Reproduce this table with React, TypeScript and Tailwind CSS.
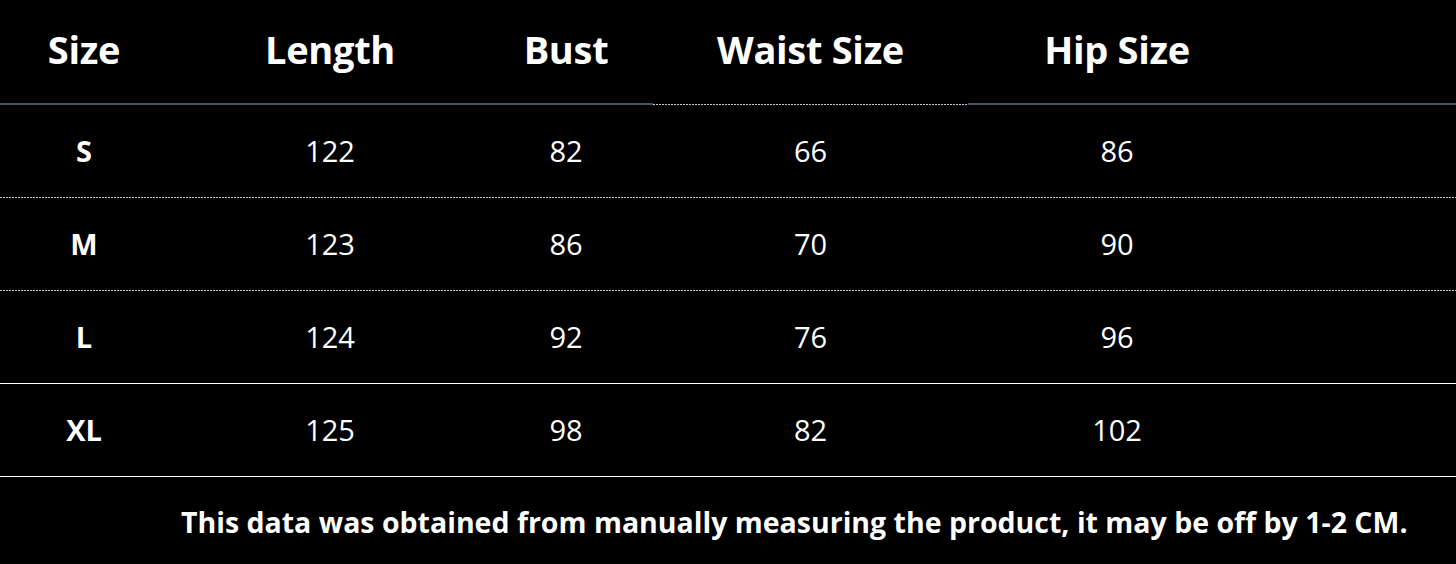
const rows = [
  ["S", "122", "82", "66", "86"],
  ["M", "123", "86", "70", "90"],
  ["L", "124", "92", "76", "96"],
  ["XL", "125", "98", "82", "102"],
];

// column widths: Size | Length | Bust | Waist | Hip | spare
const cols = ["w-[168px]", "w-[324px]", "w-[161px]", "w-[315px]", "w-[298px]", "flex-1"];
const pads = ["", "", "pr-[13px]", "", "", ""];

const dashed =
  "h-px w-full bg-[repeating-linear-gradient(90deg,#c3cbd9_0_2px,transparent_2px_3px)]";

export default function App() {
  return (
    <main className="flex h-[564px] w-[1456px] flex-col bg-black text-white font-['Open_Sans','Noto_Sans',sans-serif]">
      <div className="flex h-[105px] flex-row items-end">
        {["Size", "Length", "Bust", "Waist Size", "Hip Size", ""].map((h, i) => (
          <div key={i} className={`${cols[i]} flex h-full flex-col`}>
            <div className={`${pads[i]} flex flex-1 items-center justify-center pb-1 text-[38px] font-bold tracking-[-0.3px]`}>
              {h}
            </div>
            {i === 3 ? (
              <div className="flex h-[2px] items-end">
                <div className={dashed} />
              </div>
            ) : (
              <div className="h-[2px] bg-[#4a5366]" />
            )}
          </div>
        ))}
      </div>

      {rows.map((r, ri) => (
        <div key={ri} className="flex flex-col">
          <div className="flex h-[92px] flex-row items-center">
            {r.map((c, ci) => (
              <div
                key={ci}
                className={`${cols[ci]} ${pads[ci]} flex justify-center text-[29px] ${ci === 0 ? "font-bold" : "font-normal"}`}
              >
                {c}
              </div>
            ))}
          </div>
          {ri < 2 ? <div className={dashed} /> : <div className="h-px w-full bg-white" />}
        </div>
      ))}

      <div className="flex flex-1 items-center pl-[181px] pt-1 text-[28.5px] font-bold whitespace-nowrap">
        This data was obtained from manually measuring the product, it may be off by 1-2 CM.
      </div>
    </main>
  );
}
